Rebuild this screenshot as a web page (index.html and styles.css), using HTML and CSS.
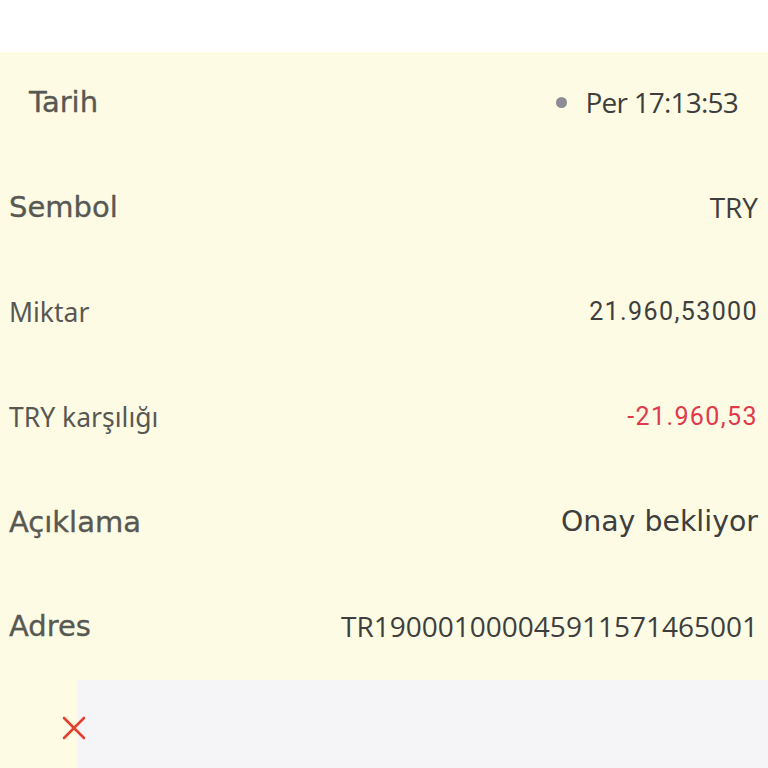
FILE: index.html
```html
<!DOCTYPE html>
<html lang="tr">
<head>
<meta charset="utf-8">
<link rel="stylesheet" href="styles.css">
</head>
<body>
<div class="topbar"></div>
<div class="sheet">
  <div class="row row-date">
    <span class="label pop">Tarih</span>
    <span class="value alt tight"><span class="dot"></span>Per 17:13:53</span>
  </div>
  <div class="row">
    <span class="label pop">Sembol</span>
    <span class="value alt">TRY</span>
  </div>
  <div class="row">
    <span class="label plex">Miktar</span>
    <span class="value num">21.960,53000</span>
  </div>
  <div class="row">
    <span class="label plex">TRY karşılığı</span>
    <span class="value num neg">-21.960,53</span>
  </div>
  <div class="row">
    <span class="label pop">Açıklama</span>
    <span class="value pop-val">Onay bekliyor</span>
  </div>
  <div class="row">
    <span class="label pop">Adres</span>
    <span class="value alt">TR190001000045911571465001</span>
  </div>
  <div class="footer">
    <div class="panel"></div>
    <svg class="close" viewBox="0 0 26 26" width="26" height="26"><path d="M3 3 L23 23 M23 3 L3 23" stroke="#e5402f" stroke-width="2.6" stroke-linecap="round"/></svg>
  </div>
</div>
</body>
</html>
```
FILE: styles.css
```css
html, body {
  margin: 0;
  padding: 0;
  background: #ffffff;
}
body {
  width: 768px;
  height: 768px;
  overflow: hidden;
}
.topbar {
  height: 52px;
  background: #ffffff;
}
.sheet {
  background: #fdfbe3;
  height: 716px;
  display: flex;
  flex-direction: column;
  position: relative;
}
.row {
  height: 104.8px;
  flex-shrink: 0;
  display: flex;
  align-items: center;
  justify-content: space-between;
  padding: 0 10px 0 9px;
}
.row:first-child {
  margin-top: -2px;
}
.row-date {
  padding: 0 30px 0 29px;
}
.label {
  color: #585853;
}
.value {
  color: #3e3e3e;
  display: flex;
  align-items: center;
}
.pop {
  font-family: "DejaVu Sans", sans-serif;
  font-size: 29px;
  -webkit-text-stroke: 0.35px #585853;
}
.pop-val {
  font-family: "DejaVu Sans", sans-serif;
  font-size: 28.4px;
}
.alt {
  font-family: "Open Sans", sans-serif;
  font-size: 28px;
}
.tight {
  letter-spacing: -0.8px;
}
.plex {
  font-family: "Noto Sans", sans-serif;
  font-size: 26.5px;
  font-weight: 400;
}
.num {
  font-family: "Roboto", sans-serif;
  font-size: 25px;
  letter-spacing: 1.4px;
}
.neg {
  color: #e0394c;
}
.dot {
  width: 11px;
  height: 11px;
  border-radius: 50%;
  background: #8d8b93;
  margin-right: 19px;
}
.footer {
  flex: 1;
  display: flex;
  padding-top: 1px;
  position: relative;
}
.panel {
  margin-left: 77px;
  flex: 1;
  background: #f5f5f8;
}
.close {
  position: absolute;
  left: 61px;
  top: 36px;
}
```
